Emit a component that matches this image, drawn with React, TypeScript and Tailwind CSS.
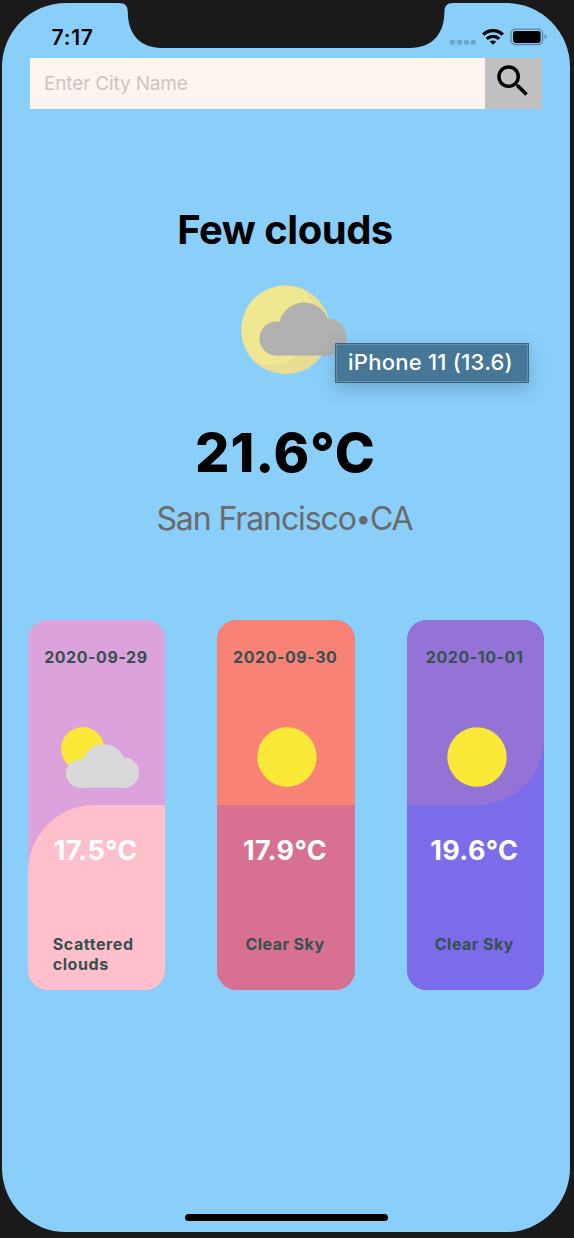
import { MdSearch } from "react-icons/md";

function StatusIcons() {
  return (
    <svg width="98" height="18" viewBox="0 0 98 18" aria-hidden="true">
      <g fill="#6ea4c6">
        <rect x="0" y="12" width="5" height="4.8" rx="1.2" />
        <rect x="7" y="12" width="5" height="4.8" rx="1.2" />
        <rect x="14" y="12" width="5" height="4.8" rx="1.2" />
        <rect x="20.8" y="12" width="5" height="4.8" rx="1.2" />
      </g>
      <g fill="none" stroke="#000" strokeWidth="3.2">
        <path d="M33.2 6.6a14 14 0 0 1 19.6 0" />
        <path d="M36.8 10.9a8.9 8.9 0 0 1 12.4 0" />
      </g>
      <path d="M43 16.8l-3.1-3.1a4.4 4.4 0 0 1 6.2 0z" />
      <rect x="61" y="1.1" width="31.6" height="15.4" rx="4.4" fill="none" stroke="#5a87a3" strokeWidth="1.3" />
      <rect x="63.1" y="3.1" width="27.5" height="11.8" rx="2.4" />
      <path d="M94.6 6.6q2 .8 2 2.2t-2 2.2z" fill="#5a87a3" />
    </svg>
  );
}

function Notch() {
  return (
    <svg className="absolute left-0 top-0" width="568" height="46" viewBox="0 0 568 46" aria-hidden="true">
      <path d="M117 0C123 0 125.8 3 125.8 9C125.8 31 138 45 160 45H408C430 45 442.4 31 442.4 9C442.4 3 445 0 451 0V-2H117Z" fill="#1a1a1a" />
    </svg>
  );
}

function FewClouds() {
  return (
    <svg width="108" height="90" viewBox="241 285 108 90" aria-hidden="true">
      <clipPath id="sun">
        <circle cx="285.6" cy="329.9" r="44.3" />
      </clipPath>
      <g clipPath="url(#sun)">
        <rect x="241" y="285" width="90" height="90" fill="#e8dd92" />
        <circle cx="269.6" cy="319.6" r="45.5" fill="#f0e891" />
      </g>
      <g fill="#b1b1b1">
        <circle cx="276.4" cy="338.6" r="17" />
        <circle cx="304" cy="328" r="25.4" />
        <circle cx="328.3" cy="337.2" r="18.4" />
        <rect x="276" y="330" width="53" height="25.6" />
      </g>
    </svg>
  );
}

function Sun() {
  return (
    <svg width="60" height="60" viewBox="0 0 60 60" aria-hidden="true">
      <circle cx="30" cy="30" r="29.7" fill="#fae937" />
    </svg>
  );
}

function ScatteredClouds() {
  return (
    <svg width="78" height="62" viewBox="61 727 78 62" aria-hidden="true">
      <circle cx="82.7" cy="748.7" r="21.6" fill="#fae937" />
      <g fill="#d9d9d9">
        <circle cx="80.2" cy="773.6" r="14.2" />
        <circle cx="103.7" cy="765.4" r="21.4" />
        <circle cx="124" cy="772.7" r="15.1" />
        <rect x="80" y="765" width="44.5" height="22.8" />
      </g>
    </svg>
  );
}

type Day = {
  date: string;
  temp: string;
  text: string;
  cloudy: boolean;
  card: string;
  top: string;
  bottom: string;
};

const days: Day[] = [
  {
    date: "2020-09-29",
    temp: "17.5°C",
    text: "Scattered clouds",
    cloudy: true,
    card: "bg-[#dba2db]",
    top: "bg-[#dba2db]",
    bottom: "bg-[#ffc0cb] rounded-tl-[67px]",
  },
  {
    date: "2020-09-30",
    temp: "17.9°C",
    text: "Clear Sky",
    cloudy: false,
    card: "bg-[#d87092]",
    top: "bg-[#f88276]",
    bottom: "bg-[#d87092]",
  },
  {
    date: "2020-10-01",
    temp: "19.6°C",
    text: "Clear Sky",
    cloudy: false,
    card: "bg-[#7b6cea]",
    top: "bg-[#9373d6] rounded-br-[67px]",
    bottom: "bg-[#7b6cea]",
  },
];

function DayCard({ day }: { day: Day }) {
  return (
    <article className={`flex h-[370.5px] w-[137.3px] flex-col overflow-hidden rounded-[20px] ${day.card}`}>
      <div className={`flex h-[185.3px] shrink-0 flex-col items-center pt-[27px] ${day.top}`}>
        <div className="mr-[1.5px] text-[16px] leading-5 font-bold tracking-[0.55px] whitespace-nowrap text-[#36504f]">{day.date}</div>
        <div className={day.cloudy ? "mt-[60px] ml-[6px]" : "mt-[60px] ml-[3px]"}>
          {day.cloudy ? <ScatteredClouds /> : <Sun />}
        </div>
      </div>
      <div className={`flex h-[185.3px] shrink-0 flex-col items-center pt-[29.3px] ${day.bottom}`}>
        <div className="mr-[2px] text-[27px] leading-8 font-bold tracking-[0.35px] whitespace-nowrap text-white">{day.temp}</div>
        <div className={`mt-[67.3px] max-w-[88px] text-[16px] leading-5 font-bold text-[#36504f] ${day.cloudy ? "tracking-[0.6px]" : "mr-[2px] tracking-[0.45px]"}`}>
          {day.text}
        </div>
      </div>
    </article>
  );
}

export default function App() {
  return (
    <div className="h-[1238px] w-[574px] overflow-hidden bg-[#1a1a1a] pt-[3px] pl-[2px] font-['Inter',sans-serif]">
      <main className="relative flex h-[1229px] w-[568px] flex-col overflow-hidden rounded-[64px] bg-[#8acffa]">
        <Notch />
        <header className="flex h-[55px] items-start justify-between pr-[22px] pl-[49.5px]">
          <span className="mt-[23px] text-[21px] leading-6 font-semibold tracking-[0.8px]">7:17</span>
          <span className="mt-[25px]">
            <StatusIcons />
          </span>
        </header>
        <div className="mx-[28px] flex h-[50.7px]">
          <input
            className="min-w-0 flex-1 bg-[#fef4ef] px-[14px] pt-[2px] text-[19px] tracking-[-0.15px] outline-none placeholder:text-[#cbc4c1] placeholder:opacity-100"
            placeholder="Enter City Name"
          />
          <button className="flex w-[57px] items-start bg-[#c0c0c0] pt-[2px] pl-[7px]" aria-label="Search">
            <MdSearch size={42} />
          </button>
        </div>
        <section className="flex flex-col items-center">
          <h1 className="mt-[101.3px] mr-[2px] text-[40px] leading-10 font-bold tracking-[-0.5px]">Few clouds</h1>
          <div className="relative mt-[35px] ml-[17px] h-[90px]">
            <FewClouds />
            <div className="absolute top-[58px] left-[94px] flex h-[40px] w-[194px] items-center justify-center border border-[#41647b] bg-[#467796] pr-[2px] pb-[2px] text-[22px] leading-none font-medium tracking-[0.25px] whitespace-nowrap text-white shadow-[0_6px_18px_rgba(40,80,110,0.3),inset_0_0_0_1px_#668fab]">
              iPhone 11 (13.6)
            </div>
          </div>
          <div className="mt-[48px] mr-[1px] text-[54px] leading-[60px] font-extrabold tracking-[0.9px]">21.6°C</div>
          <div className="mt-[16px] mr-[3px] h-10 text-[32px] leading-10 tracking-[-1.1px] text-[#6a6a6a]">
            San Francisco<span className="align-[2px] text-[27px] leading-none">•</span>CA
          </div>
        </section>
        <section className="mt-[81px] flex justify-between px-[26px]">
          {days.map((day) => (
            <DayCard key={day.date} day={day} />
          ))}
        </section>
        <div className="mt-auto mb-[11px] h-[7px] w-[203px] self-center rounded-full bg-black" />
      </main>
    </div>
  );
}
